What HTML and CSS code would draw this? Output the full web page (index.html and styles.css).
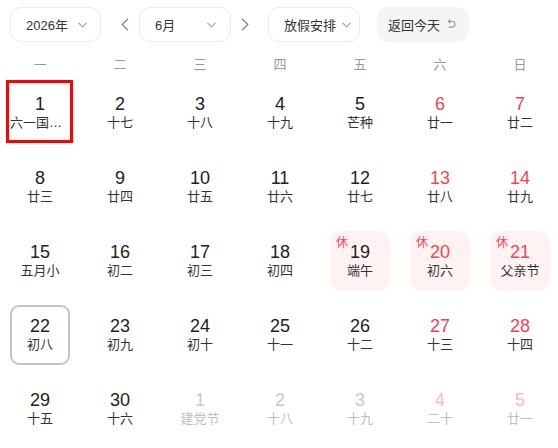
FILE: index.html
```html
<!DOCTYPE html>
<html lang="zh-CN">
<head>
<meta charset="utf-8">
<title>日历</title>
<link rel="stylesheet" href="styles.css">
</head>
<body>
<div class="calendar">
  <div class="toolbar">
    <div class="select year"><span>2026年</span><svg class="caret" width="9" height="6" viewBox="0 0 9 6"><path d="M0.5 0.8 L4.5 4.8 L8.5 0.8" fill="none" stroke="#999" stroke-width="1.1"/></svg></div>
    <span class="nav prev"><svg width="8" height="13" viewBox="0 0 8 13"><path d="M7 0.8 L1.2 6.5 L7 12.2" fill="none" stroke="#888" stroke-width="1.3"/></svg></span>
    <div class="select month"><span>6月</span><svg class="caret" width="9" height="6" viewBox="0 0 9 6"><path d="M0.5 0.8 L4.5 4.8 L8.5 0.8" fill="none" stroke="#999" stroke-width="1.1"/></svg></div>
    <span class="nav next"><svg width="8" height="13" viewBox="0 0 8 13"><path d="M1 0.8 L6.8 6.5 L1 12.2" fill="none" stroke="#888" stroke-width="1.3"/></svg></span>
    <div class="select holiday"><span>放假安排</span><svg class="caret" width="9" height="6" viewBox="0 0 9 6"><path d="M0.5 0.8 L4.5 4.8 L8.5 0.8" fill="none" stroke="#999" stroke-width="1.1"/></svg></div>
    <div class="back"><span>返回今天</span><svg class="undo" width="9" height="10" viewBox="0 0 9 10"><path d="M1.5 2.5 H5.2 A2.8 2.8 0 0 1 5.2 8.1 H1.5" fill="none" stroke="#999" stroke-width="1.1"/><path d="M3.3 0.6 L1.3 2.5 L3.3 4.4" fill="none" stroke="#999" stroke-width="1.1"/></svg></div>
  </div>
  <div class="weekdays">
    <div>一</div><div>二</div><div>三</div><div>四</div><div>五</div><div>六</div><div>日</div>
  </div>
  <div class="days">
    <div class="cell selected"><div class="num">1</div><div class="lunar">六一国际儿童节</div></div>
    <div class="cell"><div class="num">2</div><div class="lunar">十七</div></div>
    <div class="cell"><div class="num">3</div><div class="lunar">十八</div></div>
    <div class="cell"><div class="num">4</div><div class="lunar">十九</div></div>
    <div class="cell"><div class="num">5</div><div class="lunar">芒种</div></div>
    <div class="cell weekend"><div class="num">6</div><div class="lunar">廿一</div></div>
    <div class="cell weekend"><div class="num">7</div><div class="lunar">廿二</div></div>

    <div class="cell"><div class="num">8</div><div class="lunar">廿三</div></div>
    <div class="cell"><div class="num">9</div><div class="lunar">廿四</div></div>
    <div class="cell"><div class="num">10</div><div class="lunar">廿五</div></div>
    <div class="cell"><div class="num">11</div><div class="lunar">廿六</div></div>
    <div class="cell"><div class="num">12</div><div class="lunar">廿七</div></div>
    <div class="cell weekend"><div class="num">13</div><div class="lunar">廿八</div></div>
    <div class="cell weekend"><div class="num">14</div><div class="lunar">廿九</div></div>

    <div class="cell"><div class="num">15</div><div class="lunar">五月小</div></div>
    <div class="cell"><div class="num">16</div><div class="lunar">初二</div></div>
    <div class="cell"><div class="num">17</div><div class="lunar">初三</div></div>
    <div class="cell"><div class="num">18</div><div class="lunar">初四</div></div>
    <div class="cell rest"><span class="tag">休</span><div class="num">19</div><div class="lunar">端午</div></div>
    <div class="cell rest weekend"><span class="tag">休</span><div class="num">20</div><div class="lunar">初六</div></div>
    <div class="cell rest weekend"><span class="tag">休</span><div class="num">21</div><div class="lunar">父亲节</div></div>

    <div class="cell today"><div class="num">22</div><div class="lunar">初八</div></div>
    <div class="cell"><div class="num">23</div><div class="lunar">初九</div></div>
    <div class="cell"><div class="num">24</div><div class="lunar">初十</div></div>
    <div class="cell"><div class="num">25</div><div class="lunar">十一</div></div>
    <div class="cell"><div class="num">26</div><div class="lunar">十二</div></div>
    <div class="cell weekend"><div class="num">27</div><div class="lunar">十三</div></div>
    <div class="cell weekend"><div class="num">28</div><div class="lunar">十四</div></div>

    <div class="cell"><div class="num">29</div><div class="lunar">十五</div></div>
    <div class="cell"><div class="num">30</div><div class="lunar">十六</div></div>
    <div class="cell other"><div class="num">1</div><div class="lunar">建党节</div></div>
    <div class="cell other"><div class="num">2</div><div class="lunar">十八</div></div>
    <div class="cell other"><div class="num">3</div><div class="lunar">十九</div></div>
    <div class="cell other weekend"><div class="num">4</div><div class="lunar">二十</div></div>
    <div class="cell other weekend"><div class="num">5</div><div class="lunar">廿一</div></div>
  </div>
</div>
</body>
</html>
```
FILE: styles.css
```css
html, body {
  margin: 0;
  padding: 0;
  overflow: hidden;
  background: #fff;
}

body {
  font-family: "Liberation Sans", "Noto Sans CJK SC", sans-serif;
  color: #333;
}

.calendar {
  width: 560px;
}

.toolbar {
  display: flex;
  align-items: center;
  padding: 7px 0 0 10px;
  height: 35px;
}

.select {
  box-sizing: border-box;
  width: 91px;
  height: 35px;
  border: 1px solid #ebebeb;
  border-radius: 11px;
  background: #fff;
  display: flex;
  align-items: center;
  justify-content: space-between;
  padding: 0 13px 0 15px;
  font-size: 13px;
  color: #333;
}

.select.month {
  width: 92px;
  padding-right: 14px;
}

.select.holiday {
  width: 92px;
  padding: 0 8px 0 15px;
}

.caret {
  display: block;
  margin-top: 1px;
}

.nav {
  display: flex;
  align-items: center;
}

.nav svg {
  display: block;
}

.nav.prev {
  margin: 0 10px 0 20px;
}

.nav.next {
  margin: 0 19px 0 10px;
}

.back {
  margin-left: 17px;
  box-sizing: border-box;
  width: 92px;
  height: 35px;
  border-radius: 11px;
  background: #f5f5f5;
  display: flex;
  align-items: center;
  padding: 0 0 0 11px;
  font-size: 13px;
  color: #333;
}

.undo {
  display: block;
  margin-left: 7px;
  margin-top: -1px;
}

.weekdays {
  display: grid;
  grid-template-columns: repeat(7, 80px);
  margin-top: 11px;
  line-height: 23px;
  font-size: 13px;
  color: #999;
  text-align: center;
}

.days {
  display: grid;
  grid-template-columns: repeat(7, 80px);
  grid-auto-rows: 74px;
  justify-items: center;
  align-items: center;
}

.cell {
  position: relative;
  box-sizing: border-box;
  width: 60px;
  height: 60px;
  padding-top: 11px;
  border-radius: 12px;
  text-align: center;
}

.num {
  font-size: 18px;
  line-height: 20px;
  color: #222;
}

.lunar {
  font-size: 13px;
  line-height: 18px;
  color: #333;
  white-space: nowrap;
  overflow: hidden;
  text-overflow: ellipsis;
}

.weekend .num {
  color: #f5434f;
}

.rest {
  background: #fff2f2;
}

.tag {
  position: absolute;
  left: 6px;
  top: 5px;
  font-size: 12px;
  line-height: 14px;
  color: #f5434f;
}

.today {
  border: 2px solid #c4c4c4;
  border-radius: 9px;
  padding-top: 9px;
}

.selected::after {
  content: "";
  position: absolute;
  left: -4px;
  top: -3px;
  width: 67px;
  height: 63px;
  box-sizing: border-box;
  border: 3px solid #ff0000;
}

.other .num {
  color: #c8c8c8;
}

.other .lunar {
  color: #c0c0c0;
}

.other.weekend .num {
  color: #ffb8bd;
}
```
